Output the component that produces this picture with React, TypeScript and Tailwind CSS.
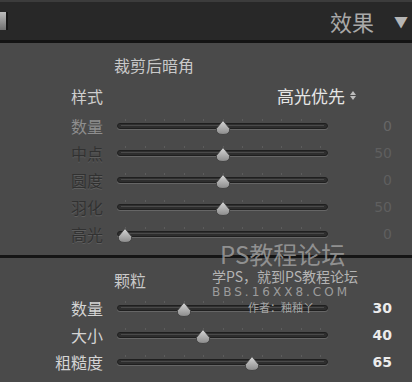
import React from 'react';

const CJK = "font-['Noto_Sans_CJK_SC','Noto_Sans',sans-serif]";

type Row = {
  label: string;
  value: number;
  frac: number;
  labelCls: string;
  valueCls: string;
};

const DIM = 'text-[#313131] [text-shadow:0_1px_0_#5e5e5e]';

const VIGNETTE: Row[] = [
  { label: '数量', value: 0, frac: 0.5, labelCls: 'text-[#8e8e8e]', valueCls: 'text-[#666]' },
  { label: '中点', value: 50, frac: 0.5, labelCls: DIM, valueCls: 'text-[#5f5f5f]' },
  { label: '圆度', value: 0, frac: 0.5, labelCls: DIM, valueCls: 'text-[#5f5f5f]' },
  { label: '羽化', value: 50, frac: 0.5, labelCls: DIM, valueCls: 'text-[#5f5f5f]' },
  { label: '高光', value: 0, frac: 0, labelCls: DIM, valueCls: 'text-[#5f5f5f]' },
];

const GRAIN: Row[] = [
  { label: '数量', value: 30, frac: 0.3, labelCls: 'text-[#d4d4d4]', valueCls: 'text-[#ececec] font-bold' },
  { label: '大小', value: 40, frac: 0.4, labelCls: 'text-[#d4d4d4]', valueCls: 'text-[#ececec] font-bold' },
  { label: '粗糙度', value: 65, frac: 0.65, labelCls: 'text-[#d4d4d4]', valueCls: 'text-[#ececec] font-bold' },
];

function Thumb() {
  return (
    <svg width="16" height="15" viewBox="0 0 16 15">
      <defs>
        <linearGradient id="tg" x1="0" y1="0" x2="0" y2="1">
          <stop offset="0" stopColor="#d8d8d8" />
          <stop offset="1" stopColor="#8a8a8a" />
        </linearGradient>
      </defs>
      <path d="M8 0.5 L14.5 8.5 Q15.5 14.5 8 14.5 Q0.5 14.5 1.5 8.5 Z" fill="url(#tg)" stroke="#3a3a3a" strokeWidth="0.8" />
    </svg>
  );
}

function Slider({ frac }: { frac: number }) {
  const center = 8 + frac * 195;
  return (
    <div className="relative h-[16px] w-[211px]">
      {Array.from({ length: 11 }).map((_, i) => (
        <span
          key={i}
          className="absolute top-[1px] h-[2px] w-[1px] bg-[#5c5c5c]"
          style={{ left: 8 + i * 19.5 }}
        />
      ))}
      <div className="absolute left-0 right-0 top-[5px] h-[6px] rounded-full border border-[#1f1f1f] bg-[#2e2e2e] shadow-[0_1px_0_#666]">
        <div className="mx-[3px] mt-[1px] h-[1px] bg-[#4a4a4a]" />
      </div>
      <div className="absolute top-[2px]" style={{ left: center - 8 }}>
        <Thumb />
      </div>
    </div>
  );
}

function SliderRow({ row }: { row: Row }) {
  return (
    <div className="flex h-[27px] items-center">
      <div className={`w-[103px] text-right text-[16px] leading-none ${CJK} ${row.labelCls}`}>
        {row.label}
      </div>
      <div className="ml-[14px]">
        <Slider frac={row.frac} />
      </div>
      <div className={`w-[64px] text-right text-[14px] leading-none font-['DejaVu_Sans',sans-serif] ${row.valueCls}`}>
        {row.value}
      </div>
    </div>
  );
}

export default function App() {
  return (
    <div className={`relative h-[382px] w-[412px] overflow-hidden bg-[#4a4a4a] ${CJK}`}>
      {/* header */}
      <div className="flex h-[43px] items-center border-t-2 border-b-[3px] border-t-[#3c3c3c] border-b-[#141414] bg-[#282828]">
        <div className="h-[18px] w-[8px] border-r-2 border-[#161616] bg-gradient-to-b from-[#bdbdbd] to-[#707070]" />
        <div className="flex-1" />
        <span className="text-[22px] leading-none text-[#a9a9a9]">效果</span>
        <span className="ml-[20px] mr-[4px] text-[14px] leading-none text-[#b5b5b5]">▼</span>
      </div>

      {/* post-crop vignette */}
      <div className="pt-[9px]">
        <div className="flex h-[26px] items-center pl-[114px] text-[16px] text-[#c9c9c9]">裁剪后暗角</div>
        <div className="mt-[4px] flex h-[27px] items-center">
          <div className="w-[103px] text-right text-[16px] leading-none text-[#cfcfcf]">样式</div>
          <div className="flex-1" />
          <span className="text-[17px] leading-none text-[#e6e6e6]">高光优先</span>
          <span className="ml-[5px] mr-[56px] flex flex-col items-center gap-[1px]">
            <span className="h-0 w-0 border-x-[3.5px] border-b-[4px] border-x-transparent border-b-[#bdbdbd]" />
            <span className="h-0 w-0 border-x-[3.5px] border-t-[4px] border-x-transparent border-t-[#bdbdbd]" />
          </span>
        </div>
        <div className="mt-[3px]">
          {VIGNETTE.map((r) => (
            <SliderRow key={r.label} row={r} />
          ))}
        </div>
      </div>

      {/* divider */}
      <div className="mt-[8px] h-[3px] bg-[#151515]" />

      {/* grain */}
      <div className="pt-[9px]">
        <div className="flex h-[26px] items-center pl-[114px] text-[16px] text-[#c9c9c9]">颗粒</div>
        <div className="mt-[1px]">
          {GRAIN.map((r) => (
            <SliderRow key={r.label} row={r} />
          ))}
        </div>
      </div>

      {/* watermark */}
      <div className="pointer-events-none absolute left-[212px] top-[241px] flex flex-col">
        <span className="ml-[8px] text-[24px] leading-[26px] text-[#a4a4a4]/80">PS教程论坛</span>
        <span className="text-[14px] leading-[18px] text-[#b4b4b4]">学PS，就到PS教程论坛</span>
        <span className="font-['DejaVu_Sans',sans-serif] text-[12px] leading-[15px] tracking-[3px] text-[#9c9c9c]">BBS.16XX8.COM</span>
        <span className="ml-[36px] text-[11px] leading-[14px] text-[#a8a8a8]">作者：釉釉丫</span>
      </div>
    </div>
  );
}
